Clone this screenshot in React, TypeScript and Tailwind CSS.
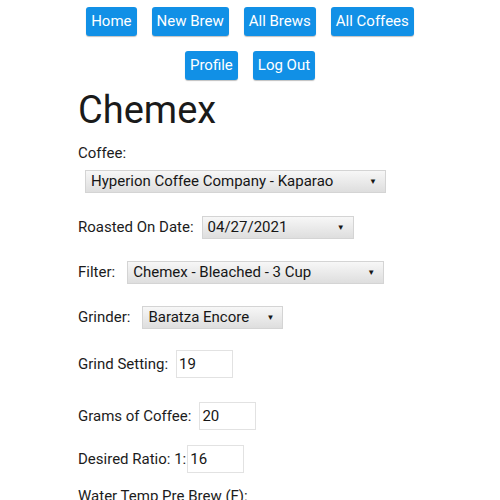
import React from "react";

const font = { fontFamily: "Roboto, 'Noto Sans', Arial, sans-serif" };

function NavButton({ children }: { children: React.ReactNode }) {
  return (
    <div className="mx-[7.5px] my-2 flex h-[29px] items-center rounded-[3px] bg-[#1190e6] px-[5px] text-[15px] text-white shadow-[0_1px_1px_rgba(0,0,0,0.25)]">
      {children}
    </div>
  );
}

function Select({ value, width }: { value: string; width: number }) {
  return (
    <div
      className="flex h-[23px] items-center justify-between border border-[#d4d4d4] bg-gradient-to-b from-[#f7f7f7] to-[#dedede] pl-[5px] pr-[8px] text-[15px] text-[#161616]"
      style={{ width }}
    >
      <span>{value}</span>
      <span className="text-[8px] leading-none">▼</span>
    </div>
  );
}

function Input({ value }: { value: string }) {
  return (
    <div className="flex h-[28px] w-[57px] items-center border border-[#e2e2e2] bg-white pl-[2px] text-[15px] text-[#161616]">
      {value}
    </div>
  );
}

export default function App() {
  return (
    <div className="h-[500px] w-[500px] overflow-hidden bg-white text-[#1c1c1c]" style={font}>
      <div className="-mt-[1px] flex justify-center">
        <NavButton>Home</NavButton>
        <NavButton>New Brew</NavButton>
        <NavButton>All Brews</NavButton>
        <NavButton>All Coffees</NavButton>
      </div>
      <div className="-mt-[1px] flex justify-center">
        <NavButton>Profile</NavButton>
        <NavButton>Log Out</NavButton>
      </div>
      <div className="pl-[78px] text-[15px]">
        <h1 className="mt-[2px] text-[38px] leading-[40px] text-[#1a1a1a]">Chemex</h1>
        <div className="mt-[13px] leading-[20px]">Coffee:</div>
        <div className="mt-[7px] pl-[7px]">
          <Select value="Hyperion Coffee Company - Kaparao" width={301} />
        </div>
        <div className="mt-[23px] flex items-center">
          <span>Roasted On Date:</span>
          <span className="ml-[8px]">
            <Select value="04/27/2021" width={152} />
          </span>
        </div>
        <div className="mt-[22px] flex items-center">
          <span>Filter:</span>
          <span className="ml-[12px]">
            <Select value="Chemex - Bleached - 3 Cup" width={257} />
          </span>
        </div>
        <div className="mt-[22px] flex items-center">
          <span>Grinder:</span>
          <span className="ml-[12px]">
            <Select value="Baratza Encore" width={141} />
          </span>
        </div>
        <div className="mt-[21px] flex items-center">
          <span>Grind Setting:</span>
          <span className="ml-[8px]">
            <Input value="19" />
          </span>
        </div>
        <div className="mt-[24px] flex items-center">
          <span>Grams of Coffee:</span>
          <span className="ml-[8px]">
            <Input value="20" />
          </span>
        </div>
        <div className="mt-[15px] flex items-center">
          <span>Desired Ratio: 1:</span>
          <span className="ml-[1px]">
            <Input value="16" />
          </span>
        </div>
        <div className="mt-[13px] leading-[20px]">Water Temp Pre Brew (F):</div>
      </div>
    </div>
  );
}
